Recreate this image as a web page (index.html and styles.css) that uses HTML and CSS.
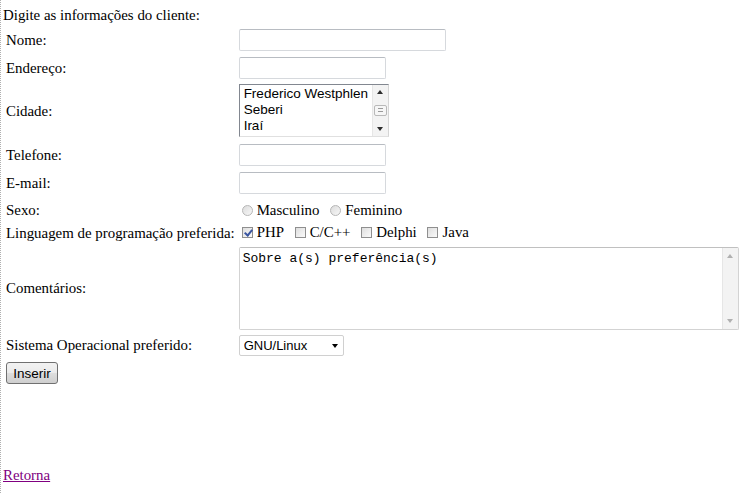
FILE: index.html
```html
<!DOCTYPE html>
<html lang="pt-BR">
<head>
    <meta charset="UTF-8">
    <title>Cadastro de cliente</title>
    <link rel="stylesheet" href="styles.css">
</head>
<body>
    <p class="intro">Digite as informações do cliente:</p>

    <form class="client-form">
        <table class="form-table">
            <tr>
                <td>Nome:</td>
                <td><input type="text" class="field field-wide" name="nome"></td>
            </tr>
            <tr>
                <td>Endereço:</td>
                <td><input type="text" class="field" name="endereco"></td>
            </tr>
            <tr>
                <td>Cidade:</td>
                <td>
                    <div class="listbox">
                        <select name="cidade" size="3" class="listbox-select">
                            <option>Frederico Westphlen</option>
                            <option>Seberi</option>
                            <option>Iraí</option>
                        </select>
                        <div class="scrollbar">
                            <span class="arrow arrow-up"></span>
                            <span class="thumb"></span>
                            <span class="arrow arrow-down"></span>
                        </div>
                    </div>
                </td>
            </tr>
            <tr>
                <td>Telefone:</td>
                <td><input type="text" class="field" name="telefone"></td>
            </tr>
            <tr>
                <td>E-mail:</td>
                <td><input type="text" class="field" name="email"></td>
            </tr>
            <tr class="row-choice row-sexo">
                <td>Sexo:</td>
                <td>
                    <label class="opt"><input type="radio" name="sexo" class="radio">Masculino</label>
                    <label class="opt"><input type="radio" name="sexo" class="radio">Feminino</label>
                </td>
            </tr>
            <tr class="row-choice row-lang">
                <td>Linguagem de programação preferida:</td>
                <td>
                    <label class="opt"><input type="checkbox" class="check" checked>PHP</label>
                    <label class="opt"><input type="checkbox" class="check">C/C++</label>
                    <label class="opt"><input type="checkbox" class="check">Delphi</label>
                    <label class="opt"><input type="checkbox" class="check">Java</label>
                </td>
            </tr>
            <tr>
                <td>Comentários:</td>
                <td>
                    <div class="memo">
                        <textarea name="comentarios" class="memo-text">Sobre a(s) preferência(s)</textarea>
                        <div class="scrollbar scrollbar-off">
                            <span class="arrow arrow-up"></span>
                            <span class="arrow arrow-down"></span>
                        </div>
                    </div>
                </td>
            </tr>
            <tr>
                <td>Sistema Operacional preferido:</td>
                <td>
                    <span class="select-wrap">
                        <select name="so" class="dropdown">
                            <option>GNU/Linux</option>
                            <option>Windows</option>
                            <option>Mac OS</option>
                        </select>
                    </span>
                </td>
            </tr>
            <tr>
                <td colspan="2"><button type="button" class="btn">Inserir</button></td>
            </tr>
        </table>
    </form>

    <a href="#" class="back-link">Retorna</a>
</body>
</html>
```

FILE: styles.css
```css
html {
    background: #fff;
}

body {
    margin: 0;
    padding: 7px 0 0 2px;
    border-left: 1px dotted #b0b0b0;
    min-height: 493px;
    box-sizing: border-box;
    font-family: "Liberation Serif", "Times New Roman", serif;
    font-size: 14.9px;
    color: #000;
}

.intro {
    margin: 0 0 1px;
}

.client-form {
    margin: 0;
}

.form-table {
    border-spacing: 2px;
}

.form-table td {
    padding: 1px;
    white-space: nowrap;
}

.row-sexo td {
    height: 19px;
    padding-top: 3px;
}

.row-lang td {
    height: 18px;
}

.field {
    box-sizing: border-box;
    width: 147px;
    height: 22px;
    margin: 1px 0;
    border: 1px solid #d6d9dd;
    border-top-color: #b8bcc2;
    border-radius: 2px;
    padding: 1px 3px;
    font: 13px "Liberation Sans", Arial, sans-serif;
    vertical-align: middle;
}

.field-wide {
    width: 207px;
}

.listbox {
    display: flex;
    width: 150px;
    height: 53px;
    margin-bottom: 2px;
    box-sizing: border-box;
    border: 1px solid #828790;
    border-right-color: #d5d5d5;
    border-bottom-color: #e0e0e0;
    background: #fff;
}

.listbox-select {
    flex: 1;
    min-width: 0;
    border: none;
    outline: none;
    padding: 1px 0 0 4px;
    font: 13.5px "Liberation Sans", Arial, sans-serif;
    color: #000;
    overflow: hidden;
}

.listbox-select option {
    padding: 0;
    line-height: 16px;
}

.scrollbar {
    width: 16px;
    flex: none;
    background: #f3f3f3;
    border-left: 1px solid #e6e6e6;
    display: flex;
    flex-direction: column;
    justify-content: space-between;
    align-items: center;
    padding: 5px 0;
    box-sizing: border-box;
}

.arrow {
    width: 0;
    height: 0;
    border-left: 3px solid transparent;
    border-right: 3px solid transparent;
}

.arrow-up {
    border-bottom: 4px solid #2c2c2c;
}

.arrow-down {
    border-top: 4px solid #2c2c2c;
}

.thumb {
    width: 11px;
    height: 9px;
    border: 1px solid #b9b9b9;
    border-radius: 2px;
    background: repeating-linear-gradient(#f6f6f6 0 1px, #9a9a9a 1px 2px, #f6f6f6 2px 3px);
    background-size: 5px 7px;
    background-position: center;
    background-repeat: no-repeat;
    background-color: #f6f6f6;
}

.scrollbar-off .arrow-up {
    border-bottom-color: #b0b0b0;
}

.scrollbar-off .arrow-down {
    border-top-color: #b0b0b0;
}

.scrollbar-off {
    padding: 6px 0;
}

.opt {
    display: inline-flex;
    align-items: center;
    margin-right: 4px;
}

.radio,
.check {
    appearance: none;
    width: 11px;
    height: 11px;
    margin: 0 4px 0 3px;
    border: 1px solid #b6b6b6;
    background: linear-gradient(135deg, #dcdcdc, #f7f7f7);
    position: relative;
}

.radio {
    border-radius: 50%;
}

.check {
    border-color: #8f8f8f;
    background: linear-gradient(135deg, #dedede, #fafafa);
}

.check:checked::after {
    content: "";
    position: absolute;
    left: 3px;
    top: 0;
    width: 3px;
    height: 6px;
    border: solid #3a55a0;
    border-width: 0 2px 2px 0;
    transform: rotate(40deg);
}

.memo {
    display: flex;
    width: 500px;
    height: 83px;
    margin-top: 1px;
    box-sizing: border-box;
    border: 1px solid #d3d3d3;
    border-top-color: #c0c0c0;
    border-radius: 2px;
    background: #fff;
}

.memo-text {
    flex: 1;
    border: none;
    outline: none;
    resize: none;
    padding: 3px 3px;
    font: 13px "Liberation Mono", "Courier New", monospace;
    color: #000;
}

.select-wrap {
    position: relative;
    display: inline-block;
}

.select-wrap::after {
    content: "";
    position: absolute;
    right: 6px;
    top: 10px;
    border-left: 3px solid transparent;
    border-right: 3px solid transparent;
    border-top: 4px solid #000;
    pointer-events: none;
}

.dropdown {
    appearance: none;
    width: 105px;
    height: 21px;
    margin: 1px 0 0;
    border: 1px solid #d0d0d0;
    border-radius: 2px;
    background: #fff;
    padding: 0 4px;
    font: 13px "Liberation Sans", Arial, sans-serif;
    color: #000;
}

.btn {
    width: 52px;
    height: 22px;
    margin-top: 2px;
    padding: 0;
    border: 1px solid #707070;
    border-radius: 3px;
    background: linear-gradient(#f2f2f2, #ebebeb 48%, #dddddd 52%, #cfcfcf);
    font: 13.5px "Liberation Sans", Arial, sans-serif;
    color: #000;
}

.back-link {
    display: inline-block;
    margin-top: 80px;
    color: #800080;
}
```
